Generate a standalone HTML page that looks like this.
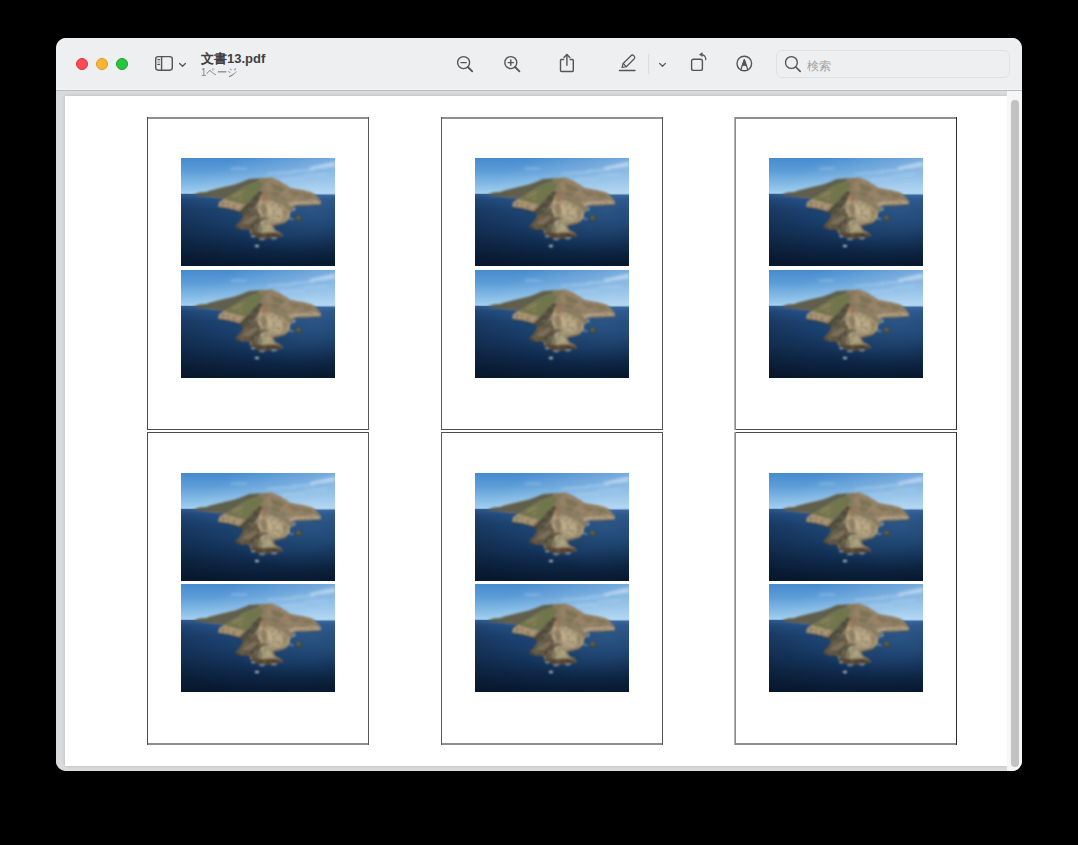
<!DOCTYPE html>
<html><head><meta charset="utf-8">
<style>
html,body{margin:0;padding:0;background:#000;width:1078px;height:845px;overflow:hidden;font-family:"Liberation Sans",sans-serif}
#win{position:absolute;left:56px;top:38px;width:966px;height:733px;border-radius:10px;overflow:hidden;background:#eeeff1}
#tb{position:absolute;left:0;top:0;width:966px;height:52px;background:#eeeff1}
#tbline{position:absolute;left:0;top:52px;width:966px;height:1px;background:#b9babc}
#frame{position:absolute;left:0;top:53px;width:951px;height:680px;background:#dadbdd}
#page{position:absolute;left:9px;top:58px;width:942px;height:670px;background:#fff;box-shadow:0 0 4px rgba(0,0,0,0.16)}
#track{position:absolute;left:951px;top:53px;width:15px;height:680px;background:#f6f6f6}
#thumb{position:absolute;left:955px;top:62px;width:8px;height:667px;border-radius:4px;background:#c2c2c2}
.dot{position:absolute;width:12px;height:12px;border-radius:50%;top:20px}
#title{position:absolute;left:145px;top:12px;font-size:13px;font-weight:bold;color:#404042}
#sub{position:absolute;left:145px;top:28px;font-size:10.5px;color:#7f7f81;transform:scaleX(0.93);transform-origin:0 0}
#search{position:absolute;left:720px;top:12px;width:234px;height:27.5px;border:1px solid #dfe0e2;border-radius:6px;box-sizing:border-box;background:#eeeff1}
#stext{position:absolute;left:751px;top:20px;font-size:12px;color:#a3a3a5}
svg{position:absolute;left:0;top:0}
</style></head><body>
<div id="win">
  <div id="tb"></div>
  <div id="tbline"></div>
  <div style="position:absolute;left:0;top:51px;width:966px;height:1px;background:#f4f5f7"></div>
  <div id="frame"></div>
  <div id="page"></div>
  <div id="track"></div>
  <div id="thumb"></div>
  <div class="dot" style="left:20px;background:#fd4b53;border:0.8px solid #dc3442;box-sizing:border-box"></div>
  <div class="dot" style="left:40px;background:#fdb434;border:0.8px solid #de961c;box-sizing:border-box"></div>
  <div class="dot" style="left:60px;background:#28c53f;border:0.8px solid #13a52a;box-sizing:border-box"></div>
  <div id="title">文書13.pdf</div>
  <div id="sub">1ページ</div>
  <div id="search"></div>
  <div id="stext">検索</div>
</div>
<svg id="icons" width="1078" height="845" viewBox="0 0 1078 845" fill="none" stroke="#555557" stroke-width="1.4" stroke-linecap="round" stroke-linejoin="round">
  <rect x="155.7" y="56.6" width="16.6" height="13.6" rx="2.6"/>
  <line x1="161.6" y1="56.6" x2="161.6" y2="70.2"/>
  <g stroke-width="1.2"><line x1="157.8" y1="59.6" x2="159.6" y2="59.6"/><line x1="157.8" y1="62" x2="159.6" y2="62" stroke="#9a9a9c"/><line x1="157.8" y1="64.4" x2="159.6" y2="64.4"/></g>
  <polyline points="179.6,63.5 182.5,66.3 185.4,63.5" stroke-width="1.3"/>
  <circle cx="463.6" cy="62.6" r="6"/>
  <line x1="467.9" y1="67" x2="472.2" y2="71.3" stroke-width="1.8"/>
  <line x1="461" y1="62.6" x2="466.2" y2="62.6"/>
  <circle cx="510.8" cy="62.6" r="6"/>
  <line x1="515.1" y1="67" x2="519.4" y2="71.3" stroke-width="1.8"/>
  <line x1="508.2" y1="62.6" x2="513.4" y2="62.6"/>
  <line x1="510.8" y1="60" x2="510.8" y2="65.2"/>
  <path d="M563.6,59.5 L561.2,59.5 Q560.5,59.5 560.5,60.5 L560.5,70.5 Q560.5,71.5 561.5,71.5 L572.5,71.5 Q573.3,71.5 573.3,70.5 L573.3,60.5 Q573.3,59.5 572.5,59.5 L570.2,59.5"/>
  <line x1="566.9" y1="54.8" x2="566.9" y2="65.3"/>
  <polyline points="564,57.6 566.9,54.6 569.8,57.6"/>
  <path d="M622,67.5 L623.2,63.5 L631.2,55.5 Q632.5,54.5 633.6,55.6 L634.3,56.3 Q635.3,57.5 634.3,58.7 L626.3,66.7 Z" stroke-width="1.25"/>
  <line x1="623.2" y1="63.5" x2="626.3" y2="66.7" stroke-width="1.1"/>
  <line x1="619.4" y1="70.5" x2="635" y2="70.5" stroke-width="1.3"/>
  <line x1="648.7" y1="54.5" x2="648.7" y2="73.5" stroke="#d9d9db" stroke-width="1"/>
  <polyline points="659.6,63.4 662.5,66.2 665.4,63.4" stroke-width="1.3"/>
  <rect x="691.6" y="59.3" width="10.8" height="11.1" rx="2"/>
  <path d="M701.5,54.6 Q705.6,55 705.8,59.6" stroke-width="1.2"/>
  <path d="M699.8,54.4 L702.2,52.8 L702.2,56 Z" fill="#555557" stroke-width="0.8"/>
  <circle cx="744.3" cy="63.5" r="7.3"/>
  <path d="M740.8,70 L742.2,65.5 L744.3,59.6 L746.4,65.5 L747.8,70" stroke-width="1.2"/>
  <path d="M742.4,65.2 L744.3,59.6 L746.2,65.2 Z" fill="#555557" stroke-width="0.9"/>
  <circle cx="791.4" cy="62.5" r="5.9" stroke="#4f4f51" stroke-width="1.3"/>
  <line x1="795.8" y1="67" x2="800.2" y2="71.4" stroke="#4f4f51" stroke-width="1.5"/>
</svg>
<svg width="1078" height="845" viewBox="0 0 1078 845">
  <defs>
    <linearGradient id="sky" x1="0" y1="0" x2="0" y2="1">
      <stop offset="0" stop-color="#468bcf"/>
      <stop offset="0.35" stop-color="#5c9dd7"/>
      <stop offset="0.8" stop-color="#8ec2e9"/>
      <stop offset="1" stop-color="#a9d4f2"/>
    </linearGradient>
    <linearGradient id="sea" x1="0" y1="0" x2="0" y2="1">
      <stop offset="0" stop-color="#37679e"/>
      <stop offset="0.08" stop-color="#244f84"/>
      <stop offset="0.22" stop-color="#1c4270"/>
      <stop offset="0.55" stop-color="#15365f"/>
      <stop offset="1" stop-color="#0a2140"/>
    </linearGradient>
    <clipPath id="clip"><rect x="0" y="0" width="154" height="108"/></clipPath>
    <filter id="tex" x="0" y="0" width="100%" height="100%">
      <feTurbulence type="fractalNoise" baseFrequency="0.22 0.3" numOctaves="2" seed="7" result="n"/>
      <feColorMatrix in="n" type="matrix" values="0 0 0 0 0.2  0 0 0 0 0.17  0 0 0 0 0.12  -2.2 0 0 0 1.35" result="a"/>
      <feComposite in="a" in2="SourceAlpha" operator="in" result="c"/>
      <feGaussianBlur in="c" stdDeviation="0.8"/>
    </filter>
    <filter id="bl" x="-10%" y="-10%" width="120%" height="120%"><feGaussianBlur stdDeviation="0.85"/></filter>
    <filter id="bl2" x="-20%" y="-50%" width="140%" height="200%"><feGaussianBlur stdDeviation="1.4"/></filter>
    <radialGradient id="vig" cx="0.65" cy="0.15" r="0.95">
      <stop offset="0.45" stop-color="#000" stop-opacity="0"/>
      <stop offset="1" stop-color="#000" stop-opacity="0.3"/>
    </radialGradient>
    <linearGradient id="haze" x1="0" y1="0" x2="1" y2="0.3">
      <stop offset="0.3" stop-color="#cfe4f6" stop-opacity="0"/>
      <stop offset="1" stop-color="#cfe4f6" stop-opacity="0.4"/>
    </linearGradient>
    <radialGradient id="seaR" cx="0.85" cy="0.25" r="0.6">
      <stop offset="0" stop-color="#5a8cc0" stop-opacity="0.25"/>
      <stop offset="1" stop-color="#4a86bf" stop-opacity="0"/>
    </radialGradient>
    <g id="cat">
      <g clip-path="url(#clip)">
      <rect x="0" y="0" width="154" height="37" fill="url(#sky)"/>
      <rect x="0" y="35.8" width="154" height="72.2" fill="url(#sea)"/>
      <rect x="0" y="35.8" width="154" height="72.2" fill="url(#seaR)"/>
      <rect x="0" y="0" width="154" height="37" fill="url(#haze)"/>
      <g filter="url(#bl2)" opacity="0.55">
        <path d="M86,15.3 Q100,14 114,13.4 L114,14.8 Q100,15.6 86,16.2 Z" fill="#d8e8f6"/>
        <path d="M112,12.6 Q124,11.6 134,11.2 L134,12.6 Q124,13 112,13.8 Z" fill="#e0eef8"/>
        <path d="M128,9.5 Q142,6 154,3.5 L154,8.5 Q142,10.5 130,11.5 Z" fill="#e6f0fa"/>
        <path d="M100,21.3 Q112,20.4 124,20 L124,21.2 Q112,21.8 100,22.4 Z" fill="#c8e0f4"/>
        <path d="M123,17.2 Q135,16.2 146,15.6 L146,16.8 Q135,17.4 123,18.2 Z" fill="#c8e0f4"/>
        <path d="M50,10 Q58,9.4 66,10 L66,11.2 Q58,11.2 50,11.4 Z" fill="#b8d6f2"/>
      </g>
      <g filter="url(#bl)">
        <path d="M12.4,36.4 L15,35.4 L19.3,34.3 L25,34 L29,32.6 L40.1,29.8 L54,26.5 L60.2,24.2 L68,20.9 L79.1,20.3 L78,23.1 L71.3,25.4 L63.5,28.7 L56.8,33.1 L47.4,38.2 L44.6,39.8 L34,39.5 L25,38.3 L18,37.3 Z" fill="#5f5e4b"/>
        <path d="M14,36.8 L25,37.7 L34,38.6 L43,39.6 L42.9,40.6 L34,39.8 L25,38.6 L16,37.5 Z" fill="#7a6852"/>
        <path id="sil" d="M44.6,39.8 L47.4,38.2 L56.8,33.1 L63.5,28.7 L71.3,25.4 L78,23.1 L79.1,20.3 L91.4,19.7 L97.2,22.8 L104.7,26.9 L109.6,30.2 L120.4,31.9 L128,33.8 L132,35.2 L135,37.5 L137,40.2 L140.3,44.3 L139.5,46.5 L138.6,46.8 L127.9,47.2 L115.4,47.6 L111.3,49.3 L112.9,52.6 L108.8,55.1 L108.8,60 L105.5,63.4 L104,65.1 L97,66.8 L92,68.5 L94.3,72 L100,75 L102.1,77.9 L92.9,80 L80,80.7 L70,77.1 L68.6,72.1 L56.4,70.7 L54.3,68.6 L58.9,63.5 L62.9,57.1 L61.4,54.3 L55.7,52.1 L47.1,50 L37.3,48.6 L37.3,47.6 L38.5,44 L42.9,40.9 Z" fill="#8e8064"/>
        <path d="M78,23.1 L79.1,20.3 L91.4,19.7 L86,26 L80,30 L76,27 Z" fill="#8a7a5c"/>
        <path d="M42.9,40.9 L47.4,38.2 L56.8,33.1 L63.5,28.7 L71.3,25.4 L78,23.1 L82,26 L80,32 L76,37 L70,42 L64,46 L56,45 L48,42.5 Z" fill="#6c7645" opacity="0.9"/>
        <path d="M50,38 L58,34 L64,33 L60,37 L53,40 Z" fill="#9a8a62" opacity="0.6"/><path d="M66,30 L74,27 L76,30 L70,33 Z" fill="#6a7a3e" opacity="0.7"/><path d="M56,41 L62,38 L60,42 Z" fill="#a08a66" opacity="0.6"/>
        <path d="M37.3,47.6 L38.5,44 L42.9,40.9 L48,42.5 L56,45 L62,46.5 L62.4,51 L61.4,54.3 L55.7,52.1 L47.1,50 L37.3,48.6 Z" fill="#b09a76"/>
        <g fill="#6e6048" opacity="0.5"><rect x="41" y="43.5" width="1.2" height="5"/><rect x="46.5" y="44.5" width="1.4" height="5.2"/><rect x="52" y="46.5" width="1.2" height="4.5"/></g>
        <path d="M37.9,48.6 L47.1,50 L55.7,52.1 L61.4,54.3 L60,55 L54,53 L46,51 L38,49.5 Z" fill="#4e4434" opacity="0.9"/>
        <path d="M58,53 L62.4,49 L68,43.5 L74,37 L79,33.1 L82.5,34 L80,40 L75,47 L70,54 L66,58 L62,57.5 Z" fill="#4b4a38"/>
        <path d="M62.9,56.4 L58.9,63.5 L54.3,68.6 L56.4,70.7 L68.6,72.1 L74,68 L77.1,62.9 L80,54.3 L74.3,50 L67.1,57.1 Z" fill="#5e5442"/>
        <path d="M62,64 L68,60 L74,57 L77,58.5 L74,63 L68,66 L62,66.5 Z" fill="#8e7e62" opacity="0.6"/>
        <path d="M54.3,68.6 L56.4,70.7 L68.6,72.1 L70,73.5 L67,71 L60,69.8 L56,68.2 Z" fill="#463c2e"/>
        <path d="M80,37.1 L88.6,41.4 L100,47.1 L108.6,52.9 L108.6,60 L100,65 L91.4,66.4 L82.9,61.4 L77.1,54.3 L77.1,45.7 Z" fill="#b2a07e"/>
        <path d="M86,47 L94,46 L101,51 L103,58 L96,62 L88,59 Z" fill="#c4b38d" opacity="0.8"/><path d="M80,47 L84,45 L86,52 L85,60 L81,57 Z" fill="#7a6c52" opacity="0.55"/><path d="M100,49 L106,53 L107,60 L103,62 L101,56 Z" fill="#8a7a5c" opacity="0.5"/>
        <path d="M80,34 L85,35 L87,41 L83,45 L79.5,42 Z" fill="#a0704c" opacity="0.6"/>
        <path d="M84,25 L91.4,19.7 L97.2,22.8 L104.7,26.9 L109.6,30.2 L120.4,31.9 L128,33.8 L132,35.2 L135,37.5 L137,40.2 L140.3,44.3 L139.5,46 L132,45.5 L120,45 L110,42 L100,39 L92,36 L86,32 Z" fill="#9a8468"/>
        <path d="M90,26 L98,27 L104,31 L100,34 L92,32 Z" fill="#6e6e48" opacity="0.7"/><path d="M106,32 L116,34 L122,38 L112,38 Z" fill="#7a6e50" opacity="0.6"/><path d="M96,22.5 L102,25.5 L98,26.5 Z" fill="#a67a5c" opacity="0.6"/>
        <path d="M120,35 L130,36.5 L133,40 L124,39.5 Z" fill="#6e6e48" opacity="0.6"/>
        <path d="M92,33 L100,36 L96,39 L90,37 Z" fill="#6a6448" opacity="0.5"/>
        <path d="M105,44 L120,43 L135,42 L140.3,44.3 L139.5,46.5 L127.9,47.2 L115.4,47.6 L111,49 Z" fill="#b3a283"/>
        <polyline points="111.5,48.8 115.4,47.4 127.9,47 138.6,46.6 140,44.6" fill="none" stroke="#574838" stroke-width="1"/>
        <path d="M92,68.5 L97,66.8 L104,65.1 L105.5,63.4 L100,64.5 L92,66 Z" fill="#6e604a"/>
        <path d="M69,67 L75,61.5 L82,59.2 L88,60.5 L85,62 L80,63.5 L77.5,68 L77,74 L70.5,74 Z" fill="#4e4636" opacity="0.8"/>
        <path d="M77.5,70 Q79,63 82.9,61.4 Q86.5,61.5 89,66 Q92,70.5 94.3,74.3 L85.7,75.7 L78,75 Z" fill="#b0a580"/>
        <path d="M78,75 Q77,70 79.5,65 L81,68 L80.8,75 Z" fill="#6a624a" opacity="0.7"/>
        <path d="M69.4,77.3 L80,80.7 L92.9,80 L101.5,78.2 L100,75.5 L91.4,74.3 L80,75 L71.4,73.6 Z" fill="#503c2c"/>
        <ellipse cx="117.9" cy="60.5" rx="3.2" ry="2.5" fill="#4b4834"/>
        <ellipse cx="117.4" cy="59.6" rx="1.8" ry="1.1" fill="#75704e"/>
        <g opacity="0.7"><ellipse cx="72" cy="78.6" rx="1.8" ry="1" fill="#b8cce0"/>
        <ellipse cx="81" cy="81.4" rx="3" ry="0.8" fill="#b2c4d6"/>
        <ellipse cx="93" cy="80.6" rx="3" ry="0.8" fill="#b2c4d6"/>
        <ellipse cx="113.5" cy="51" rx="1" ry="1.8" fill="#b8cde0"/>
        <ellipse cx="110.5" cy="61" rx="2.2" ry="0.8" fill="#9fb9d3"/></g>
        <ellipse cx="76" cy="88" rx="2.2" ry="1.3" fill="#d0dce6"/>
        <ellipse cx="76.5" cy="87" rx="1.2" ry="0.6" fill="#5a4a3a"/>
      </g>
      <use href="#sil" filter="url(#tex)" opacity="0.7"/>
      <rect x="0" y="35.8" width="154" height="72.2" fill="url(#vig)"/>
      </g>
    </g>
  </defs>
  <g id="boxes" shape-rendering="crispEdges">
    <rect x="147" y="117" width="222" height="2" fill="#8e8e8e"/>
    <rect x="147" y="429" width="222" height="1" fill="#4c4c4c"/>
    <rect x="147" y="117" width="1" height="313" fill="#4c4c4c"/>
    <rect x="368" y="117" width="1" height="313" fill="#5a5a5a"/>
    <rect x="147" y="432" width="222" height="1" fill="#4c4c4c"/>
    <rect x="147" y="743" width="222" height="2" fill="#8e8e8e"/>
    <rect x="147" y="432" width="1" height="313" fill="#4c4c4c"/>
    <rect x="368" y="432" width="1" height="313" fill="#5a5a5a"/>
    <rect x="441" y="117" width="222" height="2" fill="#8e8e8e"/>
    <rect x="441" y="429" width="222" height="1" fill="#4c4c4c"/>
    <rect x="441" y="117" width="1" height="313" fill="#5a5a5a"/>
    <rect x="662" y="117" width="1" height="313" fill="#555555"/>
    <rect x="441" y="432" width="222" height="1" fill="#4c4c4c"/>
    <rect x="441" y="743" width="222" height="2" fill="#8e8e8e"/>
    <rect x="441" y="432" width="1" height="313" fill="#5a5a5a"/>
    <rect x="662" y="432" width="1" height="313" fill="#555555"/>
    <rect x="735" y="117" width="222" height="2" fill="#8e8e8e"/>
    <rect x="735" y="429" width="222" height="1" fill="#4c4c4c"/>
    <rect x="734" y="117" width="1" height="313" fill="#b4b4b4"/>
    <rect x="735" y="117" width="1" height="313" fill="#8a8a8a"/>
    <rect x="956" y="117" width="1" height="313" fill="#2e2e2e"/>
    <rect x="735" y="432" width="222" height="1" fill="#4c4c4c"/>
    <rect x="735" y="743" width="222" height="2" fill="#8e8e8e"/>
    <rect x="734" y="432" width="1" height="313" fill="#b4b4b4"/>
    <rect x="735" y="432" width="1" height="313" fill="#8a8a8a"/>
    <rect x="956" y="432" width="1" height="313" fill="#2e2e2e"/>
  </g>
  <use href="#cat" x="181" y="158"/>
  <use href="#cat" x="181" y="270"/>
  <use href="#cat" x="475" y="158"/>
  <use href="#cat" x="475" y="270"/>
  <use href="#cat" x="769" y="158"/>
  <use href="#cat" x="769" y="270"/>
  <use href="#cat" x="181" y="473"/>
  <use href="#cat" x="181" y="584"/>
  <use href="#cat" x="475" y="473"/>
  <use href="#cat" x="475" y="584"/>
  <use href="#cat" x="769" y="473"/>
  <use href="#cat" x="769" y="584"/>
</svg>
</body></html>
